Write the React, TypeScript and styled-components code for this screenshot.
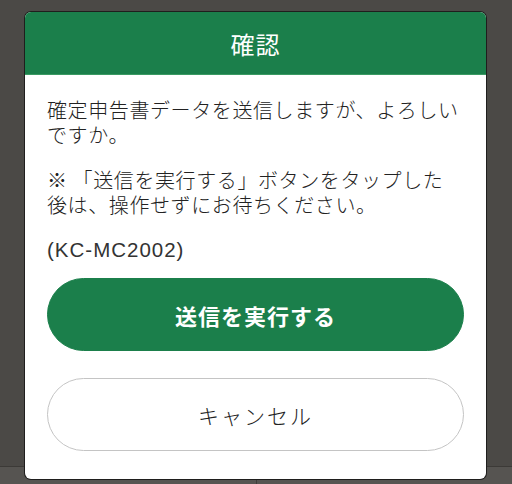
import styled, { createGlobalStyle } from "styled-components";

const GlobalStyle = createGlobalStyle`
  html, body {
    margin: 0;
    padding: 0;
  }
  body {
    font-family: "Noto Sans CJK JP", sans-serif;
    -webkit-font-smoothing: antialiased;
  }
`;

const Screen = styled.div`
  position: relative;
  width: 512px;
  height: 484px;
  overflow: hidden;
  display: flex;
  flex-direction: column;
  background: #4b4946;
`;

const PageArea = styled.div`
  flex: 1;
`;

const TabBar = styled.div`
  height: 17px;
  display: grid;
  grid-template-columns: 1fr 1fr;
  border-top: 1px solid #3c3a37;
  background: #565451;
`;

const Tab = styled.div`
  & + & {
    border-left: 1px solid #3f3d3a;
  }
`;

const Dialog = styled.div`
  position: absolute;
  top: 12px;
  left: 25px;
  width: 461px;
  height: 467px;
  display: flex;
  flex-direction: column;
  background: #fff;
  border-radius: 6px;
  overflow: hidden;
  box-shadow: 0 0 0 1px #1f1e1d;
`;

const Header = styled.div`
  height: 63px;
  flex-shrink: 0;
  display: flex;
  align-items: center;
  justify-content: center;
  background: #1b7f4b;
  border-bottom: 1px solid #3a9a63;
  box-sizing: border-box;
`;

const Title = styled.h2`
  margin: 0;
  font-family: "Noto Sans CJK JP", sans-serif;
  font-size: 24px;
  font-weight: 400;
  color: #fff;
  letter-spacing: 1px;
`;

const Body = styled.div`
  flex: 1;
  display: flex;
  flex-direction: column;
  padding: 22px 22px 29px;
`;

const Message = styled.p`
  margin: 0 0 20px;
  font-family: "Noto Sans CJK JP", sans-serif;
  font-size: 20px;
  font-weight: 300;
  line-height: 25px;
  letter-spacing: 0.6px;
  color: #222;
`;

const Code = styled(Message)`
  margin-bottom: 16px;
  font-family: "Liberation Sans", "Noto Sans CJK JP", sans-serif;
  font-size: 20.5px;
  font-weight: 400;
  letter-spacing: 1px;
  color: #333;
`;

const Actions = styled.div`
  display: flex;
  flex-direction: column;
  gap: 27px;
`;

const Button = styled.button<{ $primary?: boolean }>`
  height: 73px;
  width: 100%;
  border-radius: 37px;
  border: 1px solid ${(p) => (p.$primary ? "#1b7f4b" : "#c4c4c4")};
  background: ${(p) => (p.$primary ? "#1b7f4b" : "#fff")};
  color: ${(p) => (p.$primary ? "#fff" : "#222")};
  font-family: "Noto Sans CJK JP", sans-serif;
  font-size: ${(p) => (p.$primary ? "22px" : "21px")};
  font-weight: ${(p) => (p.$primary ? 700 : 300)};
  letter-spacing: ${(p) => (p.$primary ? "1px" : "2px")};
  cursor: pointer;
`;

export default function App() {
  return (
    <>
      <GlobalStyle />
      <Screen>
        <PageArea />
        <TabBar>
          <Tab />
          <Tab />
        </TabBar>
        <Dialog role="dialog">
          <Header>
            <Title>確認</Title>
          </Header>
          <Body>
            <Message>
              確定申告書データを送信しますが、よろしいですか。
            </Message>
            <Message>
              ※ 「送信を実行する」ボタンをタップした後は、操作せずにお待ちください。
            </Message>
            <Code>(KC-MC2002)</Code>
            <Actions>
              <Button $primary>送信を実行する</Button>
              <Button>キャンセル</Button>
            </Actions>
          </Body>
        </Dialog>
      </Screen>
    </>
  );
}
